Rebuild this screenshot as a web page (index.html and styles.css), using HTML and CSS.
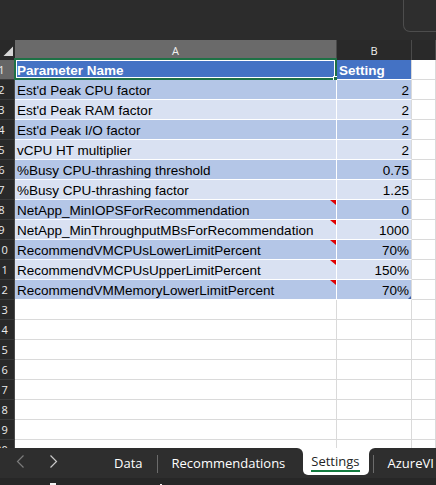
FILE: index.html
```html
<!DOCTYPE html>
<html>
<head>
<meta charset="utf-8">
<link rel="stylesheet" href="styles.css">
</head>
<body>
<div class="app">
  <div class="top"><div class="topbox"></div></div>
  <div class="sheet">
    <div class="corner"><svg width="14" height="20" viewBox="0 0 14 20"><polygon points="13,6.5 13,16 3.5,16" fill="#d6d6d6"/></svg></div>
    <div class="ch sel">A</div>
    <div class="ch">B</div>
    <div class="ch"></div>

    <div class="rh sel"><span>1</span></div>
    <div class="c hd a1">Parameter Name<div class="selbox"><div class="handle"></div></div></div>
    <div class="c hd bcol">Setting</div>
    <div class="c"></div>

    <div class="rh"><span>2</span></div>
    <div class="c b1">Est'd Peak CPU factor</div>
    <div class="c b1 bcol n">2</div>
    <div class="c"></div>

    <div class="rh"><span>3</span></div>
    <div class="c b2">Est'd Peak RAM factor</div>
    <div class="c b2 bcol n">2</div>
    <div class="c"></div>

    <div class="rh"><span>4</span></div>
    <div class="c b1">Est'd Peak I/O factor</div>
    <div class="c b1 bcol n">2</div>
    <div class="c"></div>

    <div class="rh"><span>5</span></div>
    <div class="c b2">vCPU HT multiplier</div>
    <div class="c b2 bcol n">2</div>
    <div class="c"></div>

    <div class="rh"><span>6</span></div>
    <div class="c b1">%Busy CPU-thrashing threshold</div>
    <div class="c b1 bcol n">0.75</div>
    <div class="c"></div>

    <div class="rh"><span>7</span></div>
    <div class="c b2">%Busy CPU-thrashing factor</div>
    <div class="c b2 bcol n">1.25</div>
    <div class="c"></div>

    <div class="rh"><span>8</span></div>
    <div class="c b1 cm">NetApp_MinIOPSForRecommendation</div>
    <div class="c b1 bcol n">0</div>
    <div class="c"></div>

    <div class="rh"><span>9</span></div>
    <div class="c b2 cm">NetApp_MinThroughputMBsForRecommendation</div>
    <div class="c b2 bcol n">1000</div>
    <div class="c"></div>

    <div class="rh"><span>10</span></div>
    <div class="c b1 cm">RecommendVMCPUsLowerLimitPercent</div>
    <div class="c b1 bcol n">70%</div>
    <div class="c"></div>

    <div class="rh"><span>11</span></div>
    <div class="c b2 cm">RecommendVMCPUsUpperLimitPercent</div>
    <div class="c b2 bcol n">150%</div>
    <div class="c"></div>

    <div class="rh"><span>12</span></div>
    <div class="c b1 cm">RecommendVMMemoryLowerLimitPercent</div>
    <div class="c b1 bcol n rz">70%</div>
    <div class="c"></div>

    <div class="rh"><span>13</span></div><div class="c"></div><div class="c"></div><div class="c"></div>
    <div class="rh"><span>14</span></div><div class="c"></div><div class="c"></div><div class="c"></div>
    <div class="rh"><span>15</span></div><div class="c"></div><div class="c"></div><div class="c"></div>
    <div class="rh"><span>16</span></div><div class="c"></div><div class="c"></div><div class="c"></div>
    <div class="rh"><span>17</span></div><div class="c"></div><div class="c"></div><div class="c"></div>
    <div class="rh"><span>18</span></div><div class="c"></div><div class="c"></div><div class="c"></div>
    <div class="rh"><span>19</span></div><div class="c"></div><div class="c"></div><div class="c"></div>
    <div class="rh"><span>20</span></div><div class="c"></div><div class="c"></div><div class="c"></div>
  </div>
  <div class="tabbar">
    <div class="tabs">
      <div class="tl">
        <div class="nav">
          <svg width="100" height="27" viewBox="0 0 100 27">
            <polyline points="23.5,7.5 17.5,13.5 23.5,19.5" fill="none" stroke="#7c7c7c" stroke-width="1.2"/>
            <polyline points="50.5,7.5 56.5,13.5 50.5,19.5" fill="none" stroke="#c9c9c9" stroke-width="1.2"/>
          </svg>
        </div>
        <div class="tab">Data</div>
        <div class="sep"></div>
        <div class="tab last">Recommendations</div>
      </div>
      <div class="tab active"><span>Settings</span></div>
      <div class="tr">
        <div class="sep first"></div>
        <div class="tab">AzureVI</div>
      </div>
    </div>
  </div>
  <div class="status"><span class="m1"></span><span class="m2"></span></div>
</div>
</body>
</html>
```
FILE: styles.css
```css
html, body {
  margin: 0;
  padding: 0;
}
body {
  width: 436px;
  height: 485px;
  overflow: hidden;
  background: #2b2b2b;
  font-family: "Liberation Sans", Arial, sans-serif;
}
.app {
  display: flex;
  flex-direction: column;
  height: 485px;
}
.top {
  flex: none;
  height: 40px;
  background: #2c2c2c;
  display: flex;
  justify-content: flex-end;
}
.topbox {
  width: 32px;
  height: 31px;
  border-left: 1px solid #4d4d4d;
  border-bottom: 1px solid #4d4d4d;
  border-bottom-left-radius: 7px;
  background: #2e2e2e;
}
.sheet {
  flex: none;
  height: 408px;
  overflow: hidden;
  display: grid;
  grid-template-columns: 15px 322px 75px 24px;
  grid-auto-rows: 20px;
  background: #fff;
}
.corner {
  background: #292929;
  overflow: hidden;
}
.corner svg { display: block; }
.ch {
  box-sizing: border-box;
  background: #292929;
  color: #f0f0f0;
  font-family: "Open Sans", sans-serif;
  font-size: 11px;
  display: flex;
  align-items: center;
  justify-content: center;
  border-right: 1px solid #4a4a4a;
}
.ch:last-child { border-right: none; }
.ch.sel { background: #6a6a6a; }
.rh {
  box-sizing: border-box;
  background: #292929;
  color: #ececec;
  font-family: "Open Sans", sans-serif;
  font-size: 11px;
  border-right: 1px solid #4a4a4a;
  border-bottom: 1px solid #3a3a3a;
  overflow: hidden;
  display: flex;
  align-items: center;
}
.rh span {
  flex: none;
  width: 25px;
  margin-left: -11px;
  text-align: center;
}
.rh.sel { background: #666666; }
.c {
  box-sizing: border-box;
  border-right: 1px solid #dadada;
  border-bottom: 1px solid #dadada;
  font-size: 13.5px;
  line-height: 15px;
  display: flex;
  align-items: flex-end;
  padding: 0 2px 1px;
  white-space: nowrap;
  color: #000;
  position: relative;
}
.c.n { justify-content: flex-end; }
.hd {
  background: #4472c4;
  color: #fff;
  font-weight: bold;
  border-color: #fff;
}
.b1 { background: #b4c6e7; border-color: #fff; }
.b2 { background: #d9e1f2; border-color: #fff; }
.bcol { border-right-color: #dadada; }
.selbox {
  position: absolute;
  left: -1px;
  top: -2px;
  right: -1px;
  bottom: -1px;
  border: 2px solid #1e7145;
  box-shadow: inset 0 0 0 1px #fff;
}
.handle {
  position: absolute;
  right: -5px;
  bottom: -5px;
  width: 5px;
  height: 5px;
  background: #1e7145;
  border: 1px solid #fff;
}
.cm::after {
  content: "";
  position: absolute;
  top: 0;
  right: 0;
  width: 0;
  height: 0;
  border-top: 5px solid #e00000;
  border-left: 6px solid transparent;
}
.rz::after {
  content: "";
  position: absolute;
  right: 0;
  bottom: 0;
  width: 0;
  height: 0;
  border-bottom: 3px solid #3b5ea8;
  border-left: 3px solid transparent;
}
.tabbar {
  flex: none;
  height: 30px;
  background: #2e2e2e;
}
.tabs {
  height: 27px;
  display: flex;
  background: linear-gradient(#fff 0, #fff 8px, #2e2e2e 8px);
  font-family: "Open Sans", sans-serif;
  font-size: 13px;
  color: #fff;
}
.tl {
  display: flex;
  background: #2e2e2e;
  border-top-right-radius: 6px;
}
.nav { width: 100px; }
.nav svg { display: block; }
.tab {
  display: flex;
  align-items: center;
  padding: 3px 14px 0;
  white-space: nowrap;
}
.tab.last { padding-right: 18px; }
.sep {
  flex: none;
  width: 1px;
  background: #6b6b6b;
  margin: 7px 0 2px;
}
.sep.first { margin-left: 4px; }
.active {
  background: #fff;
  color: #242424;
  border-radius: 0 0 5px 5px;
  padding: 1px 9px 0 8px;
}
.active span {
  border-bottom: 2px solid #137a3f;
}
.tr {
  flex: 1;
  display: flex;
  background: #2e2e2e;
  border-top-left-radius: 6px;
  overflow: hidden;
}
.status {
  flex: none;
  height: 7px;
  background: #272727;
  display: flex;
  align-items: flex-end;
}
.m1 {
  width: 6px;
  height: 2px;
  margin-left: 50px;
  background: #f2f2f2;
}
.m2 {
  width: 2px;
  height: 1px;
  margin-left: 104px;
  background: #f2f2f2;
}
```
